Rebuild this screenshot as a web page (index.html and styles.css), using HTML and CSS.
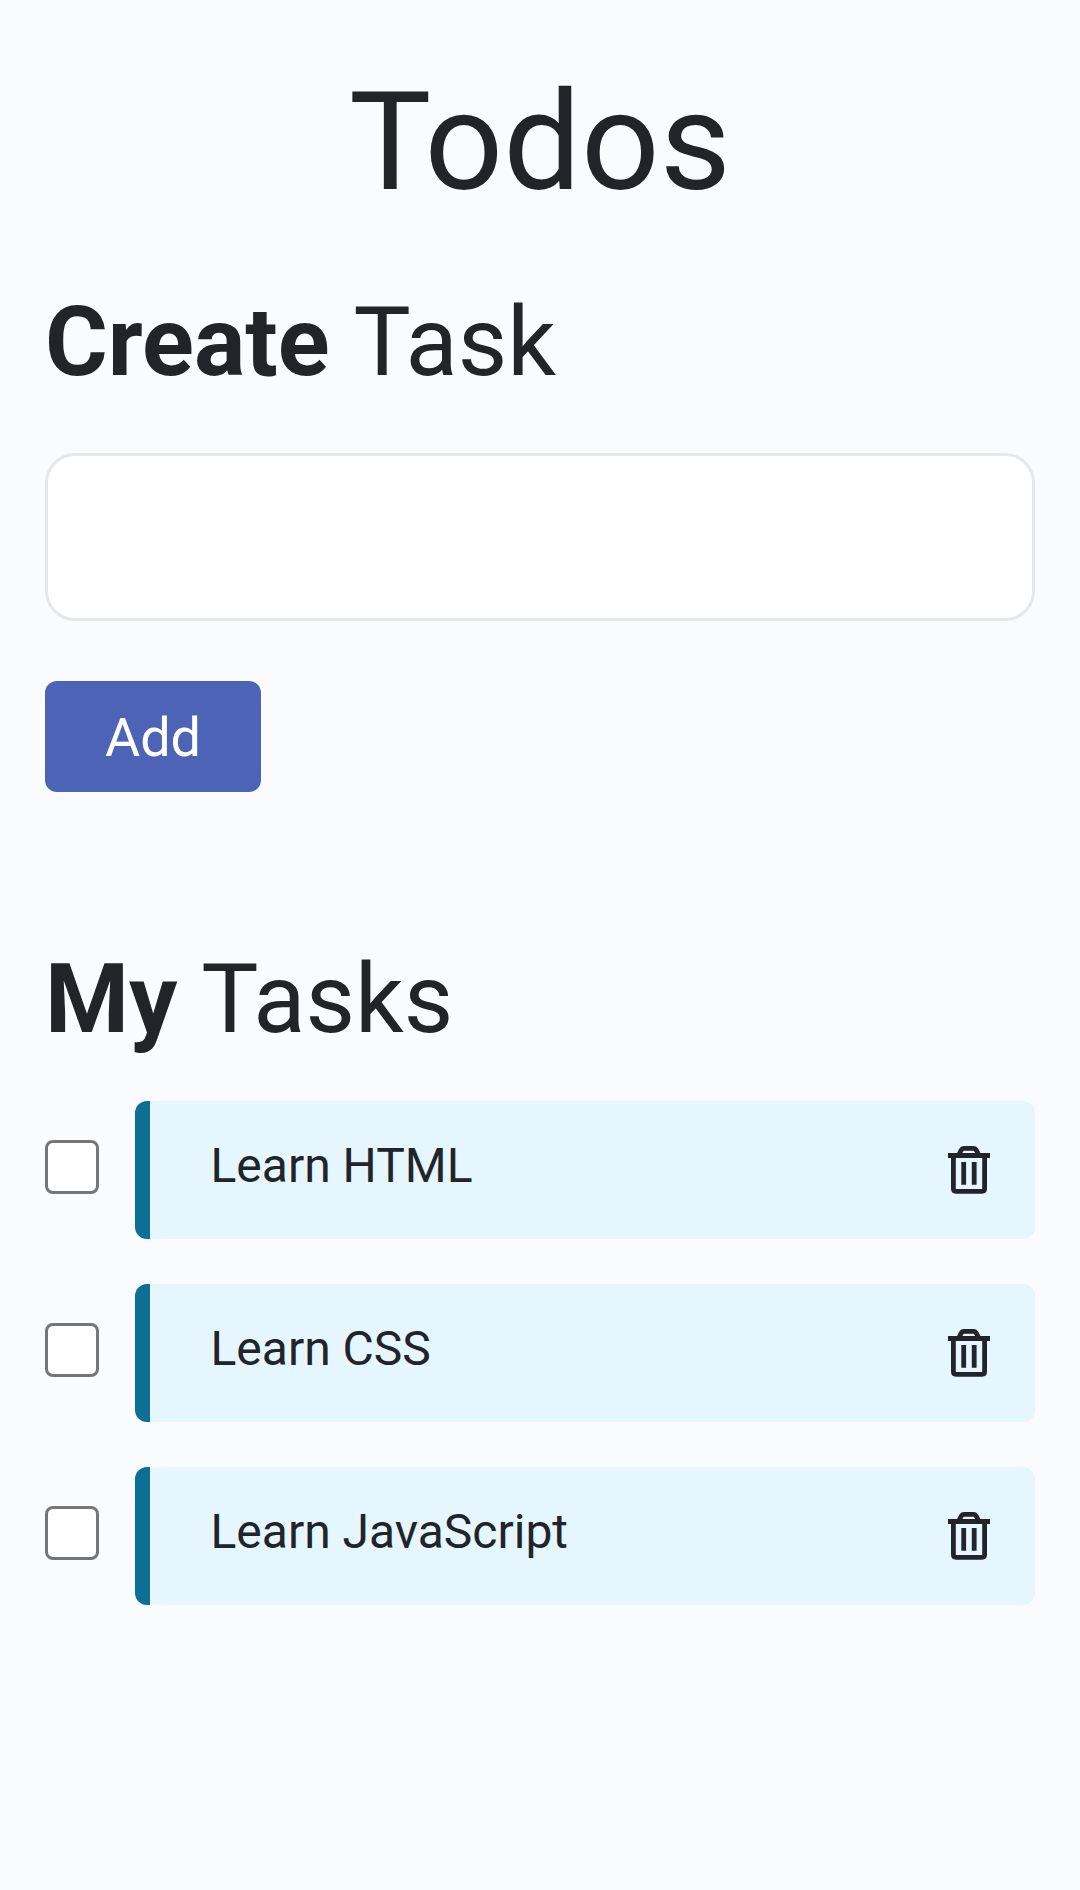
FILE: index.html
```html
<!DOCTYPE html>
<html lang="en">
<head>
<meta charset="utf-8">
<title>Todos</title>
<link rel="stylesheet" href="styles.css">
</head>
<body>
<svg class="symbols" aria-hidden="true"><symbol id="trash" viewBox="0 0 48 54"><g fill="none" stroke="currentColor" stroke-width="4.8" stroke-linejoin="round"><path d="M3 12.5H45"/><path d="M13.5 12.5L16 7.5Q17.2 5.3 19 5.3H28.5Q30.3 5.3 31.5 7.5L34 12.5M8.4 12.5V45.6Q8.4 48.4 11 48.4H37Q39.6 48.4 39.6 45.6V12.5"/><path d="M18.7 21.4V39.4M29.2 21.4V39.4" stroke-linecap="square"/></g></symbol></svg>
<main class="page">
<h1 class="title">Todos</h1>
<h2 class="heading"><b>Create </b><span>Task</span></h2>
<input class="task-input" type="text" aria-label="Task">
<button class="add-button">Add</button>
<h2 class="heading heading-list"><b>My </b><span>Tasks</span></h2>
<ul class="tasks">
<li class="task"><input class="check" type="checkbox" id="t1"><div class="card"><label for="t1">Learn HTML</label><svg class="trash"><use href="#trash"/></svg></div></li>
<li class="task"><input class="check" type="checkbox" id="t2"><div class="card"><label for="t2">Learn CSS</label><svg class="trash"><use href="#trash"/></svg></div></li>
<li class="task"><input class="check" type="checkbox" id="t3"><div class="card"><label for="t3">Learn JavaScript</label><svg class="trash"><use href="#trash"/></svg></div></li>
</ul>
</main>
</body>
</html>
```
FILE: styles.css
```css
* { box-sizing: border-box; }
body { margin: 0; background: #f9fbff; color: #212529; font-family: Roboto, sans-serif; }
.symbols { display: none; }
.page { min-height: 1890px; padding: 60px 45px; }
.title { margin: 0; font-size: 138px; line-height: 165px; font-weight: 400; text-align: center; }
.heading { margin: 60px 0 0; font-size: 96px; line-height: 115px; font-weight: 400; }
.heading b { font-weight: 700; }
.task-input { display: block; width: 100%; height: 168px; margin: 53px 0 60px; padding: 30px; border: 3px solid #e4e7eb; border-radius: 30px; background: #fff; font: inherit; font-size: 48px; }
.add-button { display: block; width: 216px; height: 111px; padding: 1px 0 0; border: 0; border-radius: 12px; background: #4c63b6; color: #fff; font: 54px Roboto, sans-serif; }
.heading-list { margin-top: 150px; }
.tasks { display: grid; gap: 45px; margin: 44px 0 0; padding: 0; list-style: none; }
.task { display: flex; align-items: center; height: 138px; gap: 36px; }
.check { appearance: none; flex: none; width: 54px; height: 54px; margin: -6px 0 0; border: 3px solid #767676; border-radius: 8px; background: #fff; }
.card { flex: 1; display: flex; justify-content: space-between; height: 138px; padding: 29px 42px 0 60.5px; border-left: 15px solid #0b7093; border-radius: 12px; background: #e5f6fe; font-size: 48px; line-height: 72px; }
.trash { width: 48px; height: 54px; margin-top: 13px; }
```
